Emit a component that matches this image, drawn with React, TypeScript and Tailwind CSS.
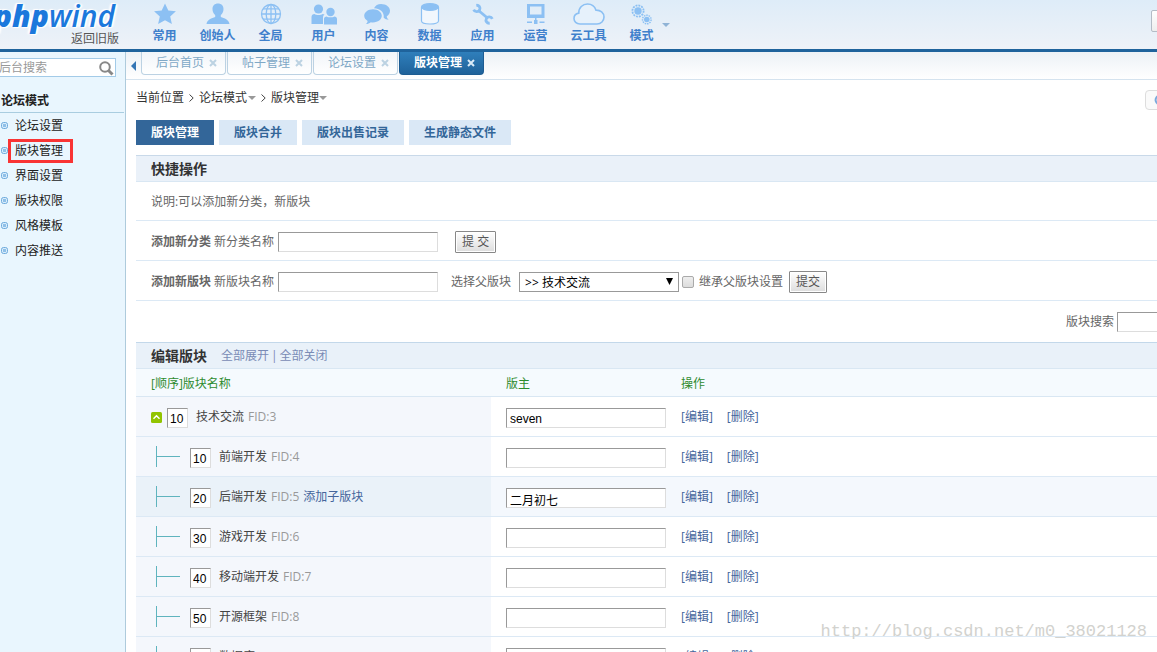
import React, { useState } from "react";
import { clsx } from "clsx";

interface Forum {
  fid: number;
  order: string;
  name: string;
  moderator: string;
  root?: boolean;
  active?: boolean;
}

const forums: Forum[] = [
  { fid: 3, order: "10", name: "技术交流", moderator: "seven", root: true },
  { fid: 4, order: "10", name: "前端开发", moderator: "" },
  { fid: 5, order: "20", name: "后端开发", moderator: "二月初七", active: true },
  { fid: 6, order: "30", name: "游戏开发", moderator: "" },
  { fid: 7, order: "40", name: "移动端开发", moderator: "" },
  { fid: 8, order: "50", name: "开源框架", moderator: "" },
  { fid: 9, order: "60", name: "数据库", moderator: "" },
];

const sideItems = ["论坛设置", "版块管理", "界面设置", "版块权限", "风格模板", "内容推送"];
const windowTabs = ["后台首页", "帖子管理", "论坛设置", "版块管理"];
const pageTabs = ["版块管理", "版块合并", "版块出售记录", "生成静态文件"];

const navItems: { label: string; icon: React.ReactNode }[] = [
  {
    label: "常用",
    icon: <path d="M16 3.500l3.300 7 7.600.8-5.700 5.100 1.700 7.700L16 20.200l-6.900 3.900 1.700-7.700-5.700-5.100 7.600-.8z" fill="currentColor" />,
  },
  {
    label: "创始人",
    icon: (
      <path
        d="M16 3.500c-3.300 0-5.500 2.200-5.500 5.400 0 2.700 1.100 4.900 2.700 6.200v1.800c-3.400 1.200-8.200 2.500-8.700 7.100h23c-.5-4.600-5.300-5.900-8.700-7.100v-1.800c1.600-1.300 2.700-3.500 2.700-6.200 0-3.200-2.200-5.400-5.500-5.400z"
        fill="currentColor"
      />
    ),
  },
  {
    label: "全局",
    icon: (
      <g fill="none" stroke="currentColor" strokeWidth="1.300">
        <circle cx="16" cy="14" r="9.500" />
        <ellipse cx="16" cy="14" rx="4.800" ry="9.500" />
        <path d="M16 4.500v19M6.500 14h19M8.200 8.800h15.600M8.200 19.200h15.600" />
      </g>
    ),
  },
  {
    label: "用户",
    icon: (
      <g fill="currentColor">
        <circle cx="10.500" cy="9" r="4.600" />
        <path d="M3.500 24v-7c0-2 1.300-3 3-3 1.600 1.300 6.400 1.300 8 0 .8 0 1.500.2 2 .6-1.200 1-1.500 2-1.500 3.400v6z" />
        <circle cx="22.500" cy="12" r="4.200" />
        <path d="M16 24.500V19c0-1.600 1-2.600 2.800-2.600 1.600 1.200 5.800 1.200 7.400 0 1.800 0 2.800 1 2.800 2.600v5.500z" />
      </g>
    ),
  },
  {
    label: "内容",
    icon: (
      <g fill="currentColor">
        <path d="M20 4c5 0 9 2.900 9 6.800 0 2.400-1.300 4.300-3.300 5.600.2 1.300.9 2.400 2 3.300-2.100 0-3.800-.7-5-2 .9-6.200-4.800-9.700-9.700-9.500C14.300 5.600 16.800 4 20 4z" />
        <path d="M12 9.200c5 0 8.800 2.900 8.800 6.600s-3.800 6.600-8.800 6.600c-.8 0-1.500 0-2.200-.2-1.300 1.200-3 1.800-4.900 1.800 1-.8 1.600-1.900 1.700-3.100-2-1.200-3.400-3-3.400-5.100 0-3.700 3.800-6.600 8.800-6.600z" />
      </g>
    ),
  },
  {
    label: "数据",
    icon: (
      <g fill="#f1f7fd" stroke="currentColor" strokeWidth="1.200">
        <path d="M7.500 7v14c0 1.800 3.500 3 8.500 3s8.500-1.200 8.500-3V7" />
        <ellipse cx="16" cy="7" rx="8.500" ry="3.300" fill="currentColor" />
      </g>
    ),
  },
  {
    label: "应用",
    icon: (
      <g fill="none" stroke="currentColor" strokeWidth="2.800">
        <path d="M11.500 10.500l9 7.500" />
        <path d="M9.300 5.300c2.800-.3 4.500 2.200 3.300 4.700-1.300 2.400-4.800 2.300-5.900-.4" />
        <path d="M22.700 23.200c-2.800.3-4.500-2.200-3.300-4.700 1.300-2.400 4.800-2.300 5.900.4" />
      </g>
    ),
  },
  {
    label: "运营",
    icon: (
      <g fill="currentColor">
        <path fillRule="evenodd" d="M7 4h17.500v14H7zM10 6.500v8h11.500v-8z" />
        <path d="M15 18h1.500v3H15zM14 20h3.500v4H14zM7 21.500h5V23H7zM19.500 21.500h5V23h-5z" />
      </g>
    ),
  },
  {
    label: "云工具",
    icon: (
      <path
        d="M7 24c-3.600 0-6-2.400-6-5.500 0-2.800 2-5 4.800-5.400C5.600 7.700 9.700 4 14.500 4c4.100 0 7.200 2.300 8.400 6.100 4.500-.2 8.100 2.700 8.100 7 0 4-3 6.900-7 6.900z"
        fill="#e6f1fb"
        stroke="currentColor"
        strokeWidth="1.600"
      />
    ),
  },
  {
    label: "模式",
    icon: (
      <g fill="currentColor">
        <circle cx="12" cy="11" r="3.700" />
        <circle cx="12" cy="11" r="5.600" fill="none" stroke="currentColor" strokeWidth="1.800" strokeDasharray="1.900 1" />
        <circle cx="20.800" cy="19.500" r="2.800" />
        <circle cx="20.800" cy="19.500" r="4.300" fill="none" stroke="currentColor" strokeWidth="1.500" strokeDasharray="1.500 .9" />
      </g>
    ),
  },
];

const inputClass =
  "h-5 border border-t-[#999] border-l-[#999] border-r-[#ddd] border-b-[#ddd] bg-white pt-0.5 font-['Liberation_Sans','Noto_Sans_CJK_SC',sans-serif] text-black outline-none";
const buttonClass =
  "h-[22px] border border-[#888] rounded-[1px] bg-linear-to-b from-white to-[#ddd] px-1.5 text-[#555] shadow-[inset_0_0_0_1px_#fff]";

function Caret({ className }: { className?: string }) {
  return (
    <svg className={clsx("w-2 h-1 shrink-0", className)} viewBox="0 0 8 4">
      <path d="M0 0h8L4 4z" fill="currentColor" />
    </svg>
  );
}

function Chevron() {
  return (
    <svg className="w-[5px] h-2 mx-[5px]" viewBox="0 0 5 8" fill="none" stroke="#444">
      <path d="M.5.500 4.200 4 .5 7.500" />
    </svg>
  );
}

function Header() {
  return (
    <header className="flex h-[52px] shrink-0 border-b-3 border-[#1f639c] bg-linear-to-b from-[#deecf8] to-[#eef2f8] overflow-hidden">
      <div className="w-[119px] shrink-0 flex flex-col items-end">
        <div className="h-[31px] pr-1 text-[30px] leading-[31px] italic font-semibold text-[#1b78dc] whitespace-nowrap [text-shadow:-1px_-1px_1px_#fff,1px_1px_1px_#fff,-2px_0_2px_#fff,2px_0_2px_#fff]">
          <span className="font-extrabold">php</span>wind
        </div>
        <a href="#" className="leading-4 text-[#555]">返回旧版</a>
      </div>
      <nav className="flex ml-[19px]">
        {navItems.map((item) => (
          <a key={item.label} href="#" className="w-[53px] flex flex-col items-center text-[#8cc0f3]">
            <svg className="w-8 h-7" viewBox="0 0 32 28">
              {item.icon}
            </svg>
            <span className="font-bold leading-4 text-[#3f80cc]">{item.label}</span>
          </a>
        ))}
      </nav>
      <Caret className="mt-[23px] -ml-1.5 text-[#8fb3d6]" />
      <button
        type="button"
        aria-label="退出"
        className="ml-auto -mr-10 mt-2.5 w-[46px] h-[22px] shrink-0 rounded-xs border border-[#b3bcc6] bg-linear-to-b from-white to-[#eee]"
      />
    </header>
  );
}

function Sidebar() {
  return (
    <aside className="w-[126px] shrink-0 border-r border-[#aecbdc] bg-[#e9f6fe] text-[#222]">
      <div className="h-[39px] pt-1.5">
        <div className="flex w-[116px] h-[19px] items-center border border-l-0 border-[#a3cbe8] bg-white">
          <input
            type="text"
            aria-label="后台搜索"
            placeholder="后台搜索"
            className="min-w-0 flex-1 -ml-px outline-none placeholder:text-[#999]"
          />
          <svg className="w-4 h-4 mr-px" viewBox="0 0 16 16" fill="none" stroke="#888">
            <circle cx="7" cy="7" r="4.800" strokeWidth="2" />
            <path d="M10.500 10.500l4 4" strokeWidth="3" />
          </svg>
        </div>
      </div>
      <h2 className="h-[22px] mr-px pl-px leading-5 border-b border-[#a9cde0] font-bold">论坛模式</h2>
      <ul>
        {sideItems.map((item) => (
          <li key={item} className="relative flex items-center h-[25px]">
            <svg className="w-[9px] h-[9px] mr-1.5" viewBox="0 0 9 9">
              <rect x="1.500" y="1.500" width="6" height="6" rx="2" fill="#d8ecfb" stroke="#6fabdc" />
              <rect x="3" y="3" width="3" height="3" fill="#8fc0e8" />
            </svg>
            <a href="#">{item}</a>
            {item === "版块管理" && (
              <span className="absolute left-2 top-px w-[65px] h-6 border-3 border-[#f93434]" />
            )}
          </li>
        ))}
      </ul>
    </aside>
  );
}

function WindowTabs() {
  const [current, setCurrent] = useState(3);
  return (
    <div className="flex h-7 border-b border-[#d5e3ef] bg-linear-to-b from-[#ecf1f6] to-white">
      <svg className="w-[5px] h-2.5 ml-[5px] mr-[5px] mt-[9px]" viewBox="0 0 5 10">
        <path d="M5 0v10L0 5z" fill="#3476b5" />
      </svg>
      <div className="flex gap-px h-[23px]">
        {windowTabs.map((tab, i) => (
          <button
            key={i}
            type="button"
            onClick={() => setCurrent(i)}
            className={clsx(
              "w-[85px] h-full flex items-center justify-end gap-[5px] pr-2 rounded-b-sm border border-t-0",
              i === current
                ? "border-[#1d5c92] bg-linear-to-b from-[#2f7fbb] to-[#1f629a] text-white font-bold"
                : "border-[#bcd2e3] bg-linear-to-b from-[#f1f5f9] to-white text-[#80a8c6]",
            )}
          >
            {tab}
            <svg
              className={clsx("w-2 h-2", i === current ? "text-[#d9ebf8]" : "text-[#bcd2e2]")}
              viewBox="0 0 8 8"
              stroke="currentColor"
              strokeWidth="2"
            >
              <path d="M1 1l6 6M7 1L1 7" />
            </svg>
          </button>
        ))}
      </div>
    </div>
  );
}

function QuickActions() {
  return (
    <section>
      <h2 className="h-[27px] pl-[15px] border-t border-b border-t-[#c9d9e9] border-b-[#d9e7f3] bg-[#eaf1f9] text-sm leading-[26px] font-bold text-[#333]">
        快捷操作
      </h2>
      <p className="h-[39px] pl-[15px] leading-10 border-b border-[#dce9f5]">说明:可以添加新分类，新版块</p>
      <form
        className="flex items-center h-10 pt-0.5 pl-[15px] border-b border-[#dce9f5]"
        onSubmit={(e) => e.preventDefault()}
      >
        <b className="mr-[3px]">添加新分类</b>
        <label htmlFor="new-category">新分类名称</label>
        <input id="new-category" type="text" className={clsx(inputClass, "w-40 px-[3px] ml-1 mr-[17px]")} />
        <button type="submit" className={buttonClass}>提 交</button>
      </form>
      <form
        className="flex items-center h-10 pt-0.5 pl-[15px] border-b border-[#dce9f5]"
        onSubmit={(e) => e.preventDefault()}
      >
        <b className="mr-[3px]">添加新版块</b>
        <label htmlFor="new-forum">新版块名称</label>
        <input id="new-forum" type="text" className={clsx(inputClass, "w-40 px-[3px] ml-1 mr-[13px]")} />
        <label htmlFor="parent-forum">选择父版块</label>
        <div className="relative ml-2 mr-[3px]">
          <select
            id="parent-forum"
            className="block appearance-none w-40 h-5 border border-[#999] bg-white pl-[5px] pt-0.5 leading-4 text-black outline-none"
          >
            <option>&gt;&gt; 技术交流</option>
          </select>
          <svg className="absolute right-1.5 top-1.5 w-[7px] h-[7px] pointer-events-none" viewBox="0 0 6 6">
            <path d="M0 0h6L3 6z" fill="#000" />
          </svg>
        </div>
        <input
          id="inherit"
          type="checkbox"
          className="appearance-none w-3 h-3 border border-[#aaa] rounded-xs bg-linear-to-b from-[#eee] to-[#dcdcdc] checked:bg-[#3476b5]"
        />
        <label htmlFor="inherit" className="ml-[5px] mr-1.5">继承父版块设置</label>
        <button type="submit" className={buttonClass}>提交</button>
      </form>
      <div className="flex items-center justify-end gap-[3px] h-[41px]">
        <label htmlFor="forum-search" className="shrink-0">版块搜索</label>
        <input id="forum-search" type="text" className={clsx(inputClass, "w-40 px-[3px] shrink-0 -mr-30")} />
      </div>
    </section>
  );
}

function ForumRow({ forum }: { forum: Forum }) {
  return (
    <tr className={clsx("h-10 border-b border-[#dce9f5]", forum.active && "bg-[#f4f8fd]")}>
      <td className={clsx("pl-[15px] pt-0.5", forum.active ? "bg-[#eaf2f9]" : "bg-[#f4f7fc]")}>
        <div className="flex items-center">
          {forum.root ? (
            <svg className="w-[11px] h-[11px] mr-[5px]" viewBox="0 0 11 11">
              <rect width="11" height="11" rx="1.500" fill="#92c401" />
              <path d="M2.500 6.700l3-3 3 3" fill="none" stroke="#fff" strokeWidth="1.500" />
            </svg>
          ) : (
            <svg className="w-6 h-[22px] ml-[5px] mr-2.5" viewBox="0 0 24 22" stroke="#5fb4be">
              <path d="M.5 0v21M0 10.500h24" />
            </svg>
          )}
          <input
            type="text"
            aria-label={`${forum.name} 顺序`}
            defaultValue={forum.order}
            className={clsx(inputClass, "w-[21px] mt-0.5 pl-0.5 mr-2")}
          />
          <span className="text-[#444]">{forum.name}</span>
          <span className="ml-1 text-[#999]">FID:{forum.fid}</span>
          {forum.active && <a href="#" className="ml-1 text-[#44659b]">添加子版块</a>}
        </div>
      </td>
      <td className="pl-[15px] pt-1">
        <input
          type="text"
          aria-label={`${forum.name} 版主`}
          defaultValue={forum.moderator}
          className={clsx(inputClass, "block w-40 px-[3px]")}
        />
      </td>
      <td className="pl-[15px] pt-0.5 text-[#44659b]">
        <a href="#" className="mr-3.5">[编辑]</a>
        <a href="#">[删除]</a>
      </td>
    </tr>
  );
}

export default function App() {
  const [tab, setTab] = useState(0);

  return (
    <div className="relative flex flex-col h-screen overflow-hidden bg-white text-xs text-[#666] font-['Open_Sans','Noto_Sans_CJK_SC',sans-serif]">
      <Header />
      <div className="flex flex-1 min-h-0">
        <Sidebar />
        <main className="flex-1 min-w-0 overflow-hidden">
          <WindowTabs />
          <div className="pl-2.5">
            <div className="flex items-center h-[35px] text-[#333]">
              <span>当前位置</span>
              <Chevron />
              <a href="#">论坛模式</a>
              <Caret className="ml-px text-[#999]" />
              <Chevron />
              <a href="#">版块管理</a>
              <Caret className="text-[#999]" />
              <button
                type="button"
                aria-label="刷新"
                className="ml-auto -mr-4 w-7 h-5 mt-1 shrink-0 pl-2 rounded-sm border border-[#ddd] bg-[#fafafa]"
              >
                <svg className="w-3 h-3" viewBox="0 0 12 12" fill="none" stroke="#7ba9dc" strokeWidth="2">
                  <path d="M9.500 3A4.500 4.500 0 1 0 10.500 7" />
                </svg>
              </button>
            </div>
            <div className="flex gap-[5px] mt-[5px] mb-2.5">
              {pageTabs.map((label, i) => (
                <button
                  key={label}
                  type="button"
                  onClick={() => setTab(i)}
                  className={clsx(
                    "h-[25px] px-[15px] font-bold",
                    i === tab ? "bg-[#336699] text-white" : "bg-[#dae8f6] text-[#336699]",
                  )}
                >
                  {label}
                </button>
              ))}
            </div>

            <QuickActions />

            <section>
              <div className="flex items-center h-[27px] pl-[15px] border-t border-b border-t-[#c3d8ea] border-b-[#d9e7f3] bg-[#e9f1f9] text-[#7a8bb5]">
                <h2 className="mr-3.5 text-sm font-bold text-[#333]">编辑版块</h2>
                <a href="#">全部展开</a>
                <span className="mx-0.5">|</span>
                <a href="#">全部关闭</a>
              </div>
              <table className="w-full table-fixed border-collapse text-left">
                <thead>
                  <tr className="h-[27px] border-b border-[#d9e7f3] bg-[#f5fafe] text-[#2e8b2e]">
                    <th className="w-[355px] pl-[15px] pt-1 font-normal">[顺序]版块名称</th>
                    <th className="w-[175px] pl-[15px] pt-1 font-normal">版主</th>
                    <th className="pl-[15px] pt-1 font-normal">操作</th>
                  </tr>
                </thead>
                <tbody>
                  {forums.map((forum) => (
                    <ForumRow key={forum.fid} forum={forum} />
                  ))}
                </tbody>
              </table>
            </section>
          </div>
        </main>
      </div>
      <div className="absolute right-2.5 bottom-2 text-[17px] leading-6 text-[#d2d2ce] font-['Liberation_Mono',monospace] pointer-events-none">
        http://blog.csdn.net/m0_38021128
      </div>
    </div>
  );
}
